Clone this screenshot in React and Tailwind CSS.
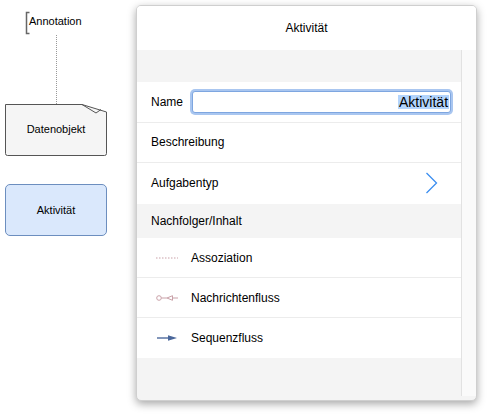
const font = { fontFamily: '"Liberation Sans", Arial, sans-serif' }

// zeilen der liste unten
const verbindungen = [
  { name: 'Assoziation', icon: 'assoc' },
  { name: 'Nachrichtenfluss', icon: 'msg' },
  { name: 'Sequenzfluss', icon: 'seq' },
]

function VerbindungIcon({ typ }) {
  if (typ === 'assoc')
    return (
      <svg width="24" height="8" viewBox="0 0 24 8">
        <line x1="1" y1="4" x2="23" y2="4" stroke="#c9a1a8" strokeWidth="1" strokeDasharray="1.5 1.5" />
      </svg>
    )
  if (typ === 'msg')
    return (
      <svg width="24" height="8" viewBox="0 0 24 8">
        <circle cx="4" cy="4" r="2.3" fill="none" stroke="#c9a1a8" strokeWidth="1" />
        <line x1="6.3" y1="4" x2="12" y2="4" stroke="#c9a1a8" strokeWidth="1" />
        <path d="M12 4 L17.5 1.7 L17.5 6.3 Z" fill="none" stroke="#c9a1a8" strokeWidth="1" />
        <line x1="17.5" y1="4" x2="23" y2="4" stroke="#c9a1a8" strokeWidth="1" />
      </svg>
    )
  return (
    <svg width="24" height="8" viewBox="0 0 24 8">
      <line x1="2" y1="4" x2="15" y2="4" stroke="#5873a3" strokeWidth="1.5" />
      <path d="M13 1.3 L22 4 L13 6.7 Z" fill="#4a679b" />
    </svg>
  )
}

export default function App() {
  return (
    <div className="relative w-[488px] h-[418px] bg-white overflow-hidden" style={font}>
      {/* zeichenflaeche links */}
      <svg className="absolute left-0 top-0" width="130" height="250" viewBox="0 0 130 250">
        <path d="M29.5 12.5 H26.5 V33.5 H29.5" fill="none" stroke="#666" strokeWidth="1.5" />
        <line x1="56.5" y1="35" x2="56.5" y2="104" stroke="#999" strokeWidth="1" strokeDasharray="1 1" />
        <path d="M5.5 104.5 H82 L106.5 112 V153.5 Q106.5 155.5 104.5 155.5 H7.5 Q5.5 155.5 5.5 153.5 Z" fill="#f5f5f5" stroke="#555" strokeWidth="1" />
        <path d="M82 104.5 L96 113 L101 109.5" fill="none" stroke="#555" strokeWidth="1" />
      </svg>
      <div className="absolute left-[29px] top-[15px] text-[11px] leading-[13px] text-black">Annotation</div>
      <div className="absolute left-[6px] top-[111px] w-[100px] h-[36px] flex items-center justify-center text-[11px] text-black">
        Datenobjekt
      </div>
      <div className="absolute left-[5px] top-[184px] w-[102px] h-[52px] rounded-[5px] border border-[#6c8ebf] bg-[#dae8fc] flex items-center justify-center text-[11px] text-black">
        Aktivität
      </div>

      {/* eigenschaften-popover */}
      <div className="absolute left-[136px] top-[5px] w-[341px] h-[396px] rounded-[5px] border border-[#cfcfcf] bg-[#f4f4f4] shadow-[0_3px_8px_rgba(0,0,0,0.35)] overflow-hidden flex flex-col">
        <div className="h-[44px] shrink-0 bg-white flex items-center justify-center text-[12px] text-black">
          Aktivität
        </div>
        <div className="flex flex-1 min-h-0">
          <div className="w-[325px] flex flex-col text-[12px] text-black">
            <div className="h-[32px] bg-[#f4f4f4]" />
            <div className="h-[41px] bg-white border-b border-[#ececec] flex items-center pl-[14px] pr-[10px] gap-[9px]">
              <span>Name</span>
              <div className="flex-1 h-[22px] rounded-[3px] border border-[#7ea6e0] shadow-[0_0_0_2px_#a9c6f0] bg-white flex items-center justify-end pr-[1px]">
                <span className="text-[14px] leading-[14px] bg-[#b3d4fc] px-[1px]">Aktivität</span>
              </div>
            </div>
            <div className="h-[40px] bg-white border-b border-[#ececec] flex items-center pl-[14px] pb-[2px]">
              Beschreibung
            </div>
            <div className="h-[41px] bg-white flex items-center justify-between pl-[14px] pr-[23px] pb-[2px]">
              <span>Aufgabentyp</span>
              <svg width="13" height="22" viewBox="0 0 13 22">
                <path d="M1.5 1 L11.5 11 L1.5 21" fill="none" stroke="#3b8ef0" strokeWidth="1.3" />
              </svg>
            </div>
            <div className="h-[34px] bg-[#f4f4f4] flex items-center pl-[14px]">
              Nachfolger/Inhalt
            </div>
            {verbindungen.map((v, i) => (
              <div
                key={v.name}
                className={'h-[40px] bg-white flex items-center pl-[18px] gap-[12px] ' + (i < 2 ? 'border-b border-[#ececec]' : '')}
              >
                <VerbindungIcon typ={v.icon} />
                <span>{v.name}</span>
              </div>
            ))}
          </div>
          <div className="w-[15px] mb-[4px] border-l border-[#e2e2e2] bg-[#fafafa]" />
        </div>
      </div>
    </div>
  )
}
